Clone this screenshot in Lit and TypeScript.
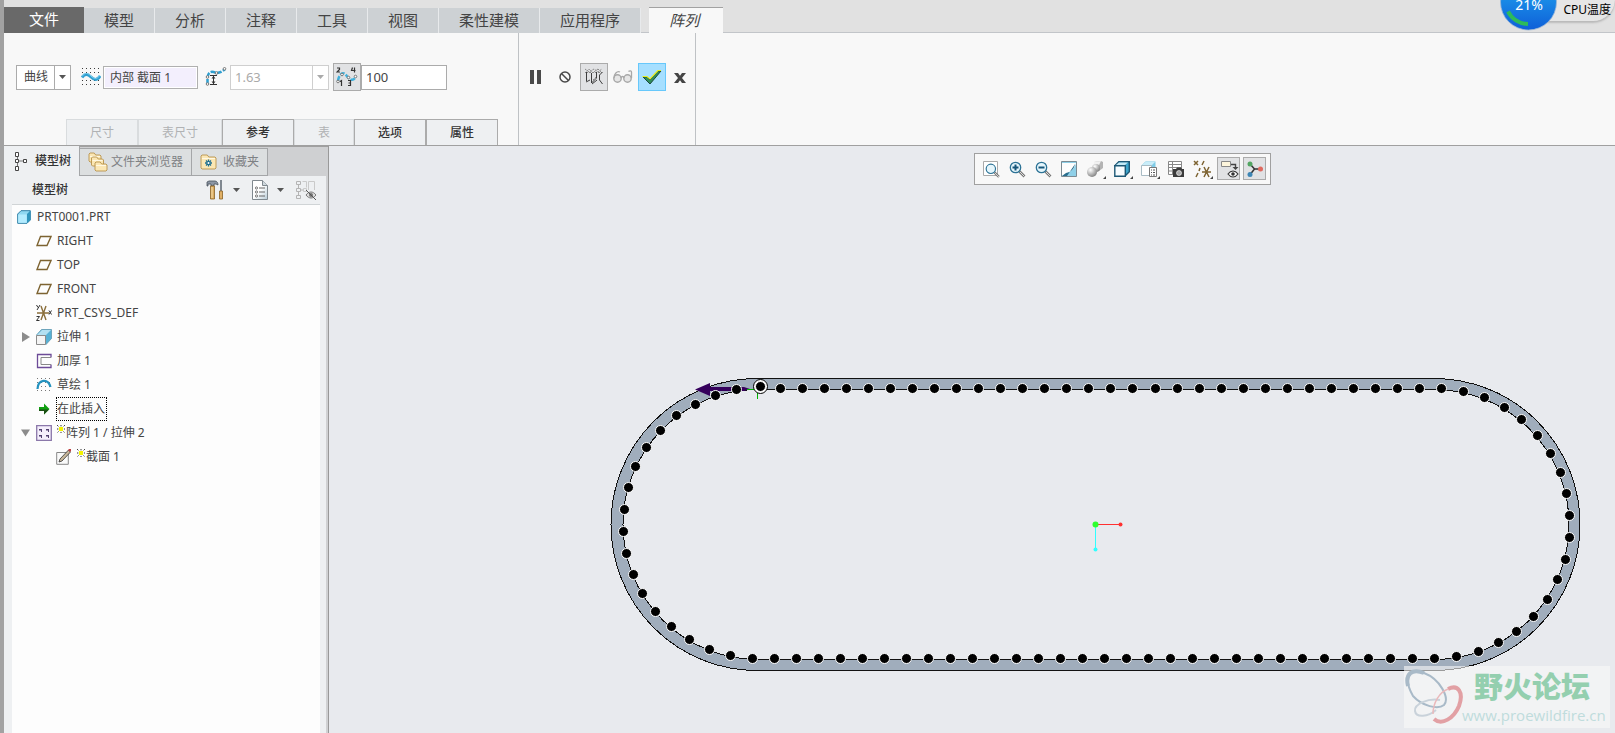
import { LitElement, html, css, svg } from "lit";
import { customElement, state } from "lit/decorators.js";
import { classMap } from "lit/directives/class-map.js";

/* ---------- icons ---------- */

const caret = html`<svg class="ic" width="7" height="4" viewBox="0 0 7 4"><path d="M0 0h7L3.500 4z" fill="currentColor" /></svg>`;

const iconWave = html`<svg class="ic" width="20" height="18" viewBox="0 0 20 18">
  ${[0.5, 4.5, 12.5, 16.5].map((y) => svg`<path d="M1 ${y}h18" stroke="#3c3c3c" stroke-dasharray="1 3" />`)}
  <path d="M1 9.500C4 5 7 6 10 9s6 4 9-1" fill="none" stroke="#2f9fd0" stroke-width="3" />
  <path d="M1 8.500C4 4 7 5 10 8s6 4 9-1" fill="none" stroke="#7fd0f0" stroke-width="1" />
</svg>`;

const iconSpacing = html`<svg class="ic" width="22" height="20" viewBox="0 0 22 20">
  <path d="M2.500 17V11C3 4 7 4 11 6c3 0 6-1 9-4" fill="none" stroke="#2f9fd0" stroke-width="2.500" stroke-dasharray="5 1.500" />
  <g fill="#fff" stroke="#777"><circle cx="2.500" cy="17" r="1.300" /><circle cx="2.500" cy="10" r="1.300" /><circle cx="11.500" cy="6" r="1.300" /><circle cx="19.500" cy="1.800" r="1.300" /></g>
  <path d="M5 8.500h7M5 17.500h7M8.500 9v8" stroke="#333" fill="none" />
  <path d="M6.500 11.500h4L8.500 9zM6.500 14.500h4L8.500 17z" fill="#333" />
</svg>`;

const iconCount = html`<svg class="ic" width="22" height="20" viewBox="0 0 22 20">
  <path d="M2 14C3 7 7 4 10 8s7 8 10 1" fill="none" stroke="#3fb0dc" stroke-width="2.500" stroke-dasharray="5 1.500" />
  <g fill="#fff" stroke="#777"><circle cx="2" cy="14.500" r="1.300" /><circle cx="6" cy="7.500" r="1.300" /><circle cx="12.500" cy="10.500" r="1.300" /><circle cx="19.500" cy="9.500" r="1.300" /></g>
  <g fill="none" stroke="#333" stroke-width="1.200"><path d="M1 1h2.500v1.500L1 5h3M16.500 .5L15.500 3.500h4M18.500 .5v5M4 14.500l1.500-1v5.500M12 13.500h2.500v5H12M12.500 16h2" /></g>
</svg>`;

const iconPause = html`<svg class="ic" width="12" height="14" viewBox="0 0 12 14"><path d="M0 0h4v14H0zM7 0h4v14H7z" fill="#4a4a4a" /></svg>`;
const iconBan = html`<svg class="ic" width="12" height="12" viewBox="0 0 12 12"><g fill="none" stroke="#484848" stroke-width="1.500"><circle cx="6" cy="6" r="5" /><path d="M2.500 2.500l7 7" /></g></svg>`;
const iconGeometry = html`<svg class="ic" width="20" height="18" viewBox="0 0 20 18">
  <path d="M1 5l4-4 4 4M1 1l4 3 5-3 4 3 4-3M10 4l4-3M2 4.500h16M9 12l3-3M14 1l4 4" fill="none" stroke="#8b8b8b" stroke-dasharray="2 1" />
  <path d="M2.500 4v9M2 14l4-2M7.500 5v10l5-5V4M8 16l5-4M18.500 4l-3 3v5l3 4" fill="none" stroke="#3d3d3d" />
</svg>`;
const iconGlasses = html`<svg class="ic" width="20" height="14" viewBox="0 0 20 14">
  <g fill="#e6e6e6" stroke="#a8a8a8" stroke-width="1.400"><circle cx="4.500" cy="8.500" r="3.700" /><circle cx="14.500" cy="8.500" r="3.700" /></g>
  <path d="M8 8c0-2 3-2 3 0M1 8C1 4 4 .500 7 2M18.500 8V2c0-1.500-2-1.500-3-.5" fill="none" stroke="#a8a8a8" stroke-width="1.300" />
</svg>`;
const iconCheck = html`<svg class="ic" width="20" height="15" viewBox="0 0 20 15">
  <path d="M1 7h4l3 3L16 1h3L8 14z" fill="#2f8f5c" stroke="#1d4a3a" stroke-width="1" />
  <path d="M.5 6.500H5l3 2.500 8-8.500h3" fill="none" stroke="#e8f01c" stroke-width="1.200" />
</svg>`;
const iconClose = html`<svg class="ic" width="12" height="10" viewBox="0 0 12 10"><path d="M0 0h4l2 2.700L8 0h4L8 5l4 5H8L6 7.300 4 10H0l4-5z" fill="#454545" /></svg>`;

const iconTreeTab = html`<svg class="ic" width="14" height="20" viewBox="0 0 14 20">
  <g fill="#fff" stroke="#444"><path d="M1.500 1.500h3v4h-3zM1.500 8.500h3v3h-3zM1.500 15.500h3v4h-3zM9.500 8.500h3v3h-3z" /></g>
  <path d="M3.500 6v2M3.500 12v3M5 10h4" stroke="#777" />
</svg>`;

const folder = (x: number, y: number, w: number, h: number) => svg`<path
  d="M${x} ${y + h - 1}V${y + 1}l1-1h${w * 0.35}l1.500 2h${w * 0.65 - 3.5}l1 1v${h - 4}l-1 1H${x + 1}z" fill="#fbe7b4" stroke="#b8934c" stroke-width=".9" />
  <path d="M${x + 1} ${y + 3.5}h${w - 2}" stroke="#fff8e2" />`;

const iconFolders = html`<svg class="ic" width="20" height="20" viewBox="0 0 20 20">${folder(1, 1, 12, 9)}${folder(3.5, 5, 12, 9)}${folder(7, 10, 12, 9)}</svg>`;
const iconFavorites = html`<svg class="ic" width="17" height="16" viewBox="0 0 17 16">${folder(1, 1, 15, 14)}
  <path d="M8.500 5.500v7M5 9h7M6 6.500l5 5M11 6.500l-5 5" stroke="#1f6f8f" stroke-width="1.300" /><circle cx="8.500" cy="9" r="1" fill="#fff" />
</svg>`;

const iconTools = html`<svg class="ic" width="18" height="20" viewBox="0 0 18 20">
  <path d="M1 2l2-1h6c2 0 3 2 3 4l-2-1H8v2H5V4H2v2H1z" fill="#8c96a4" stroke="#48505c" stroke-width=".8" />
  <path d="M4.500 6h4v13h-4z" fill="#d9ab62" stroke="#8a6224" stroke-width=".8" /><path d="M6 7v11" stroke="#f6dfae" />
  <path d="M15 0v11" stroke="#808890" stroke-width="2" /><path d="M13.500 11h3v8h-3z" fill="#e0b066" stroke="#8a6224" stroke-width=".8" />
</svg>`;
const iconList = html`<svg class="ic" width="16" height="20" viewBox="0 0 16 20">
  <defs><linearGradient id="pg" x1="0" y1="0" x2="1" y2="1"><stop offset=".5" stop-color="#fff" /><stop offset="1" stop-color="#b7cbd6" /></linearGradient></defs>
  <path d="M.5 .5h10l5 5v14H.5z" fill="url(#pg)" stroke="#80898f" /><path d="M10.500 .5v5h5" fill="#cfd9df" stroke="#80898f" />
  <path d="M7 8h6M7 12h6M7 16h6" stroke="#666" /><g fill="#fff" stroke="#666" stroke-width=".9"><circle cx="4.500" cy="8" r="1.100" /><circle cx="4.500" cy="12" r="1.100" /><circle cx="4.500" cy="16" r="1.100" /></g>
</svg>`;
const iconTreeHidden = html`<svg class="ic" width="20" height="20" viewBox="0 0 20 20">
  <g fill="none" stroke="#b4b4b4"><path d="M.5 1.500h4v3h-4zM.5 8.500h4v3h-4zM.5 15.500h4v3h-4zM2.500 5v3M2.500 12v3M5 10h3" /><path d="M6.500 1.500h4v6M7.500 8.500h3v3h-3zM12.500 10V1.500h6V10" stroke="#cacaca" /></g>
  <path d="M10 15c3-4 7-4 10 0-3 4-7 4-10 0z" fill="#ddd" stroke="#777" /><circle cx="15" cy="15" r="2" fill="#777" /><path d="M10 10l10 10" stroke="#555" />
</svg>`;

const treeIcons: Record<string, unknown> = {
  part: html`<svg class="ic" width="14" height="14" viewBox="0 0 14 14"><path d="M.7 4L4 .7h9.300V10L10 13.300H.7z" fill="#8fd8f2" stroke="#2f7fa5" /><path d="M1.200 4.500h8.500v8.300H1.200z" fill="#b4ecff" /><path d="M10 4l3.300-3.300V10L10 13.300z" fill="#2f95bd" /></svg>`,
  plane: html`<svg class="ic" width="16" height="16" viewBox="0 0 16 16"><path d="M4.500 3.500H15L11 12.500H1z" fill="none" stroke="#7d6331" stroke-width="1.400" /></svg>`,
  csys: html`<svg class="ic" width="16" height="16" viewBox="0 0 16 16"><path d="M5 1l5 14M10 1L5 15M1 8h12" stroke="#8a6e3a" stroke-width="1.400" /><path d="M.5 0l1.500 2.500M4 0L1 5M.5 11.500h3l-3 4h3M13 5.500l2.500 4M15.500 5.500l-2.500 4" fill="none" stroke="#333" /></svg>`,
  extrude: html`<svg class="ic" width="16" height="16" viewBox="0 0 16 16"><path d="M.5 6l5-5.500h10v9L10 15.500z" fill="#57b1d4" stroke="#5f98b0" stroke-width=".8" /><path d="M1 6l5-5h9L10 6z" fill="#b3e0f1" /><path d="M.5 6.500h9v9h-9z" fill="#f4f4f4" stroke="#8b8b8b" /></svg>`,
  thicken: html`<svg class="ic" width="16" height="16" viewBox="0 0 16 16"><path d="M15 4.500V1.500H1.500v13H15v-3" fill="none" stroke="#6d4b98" stroke-width="1.300" /><path d="M15 4.500H5v7h10" fill="none" stroke="#888" /></svg>`,
  sketch: html`<svg class="ic" width="16" height="16" viewBox="0 0 16 16">${[1.5, 5.5, 9.5, 13.5].map((y) => svg`<path d="M1 ${y}h14" stroke="#777" stroke-dasharray="1 3" />`)}<path d="M1.500 12C2 2 12 1 14.500 10" fill="none" stroke="#2492bf" stroke-width="2.200" /></svg>`,
  insert: html`<svg class="ic" width="16" height="16" viewBox="0 0 16 16"><path d="M3 6h5V2.500L13.500 8 8 13.500V10H3z" fill="#11a011" /><path d="M3 8.500h10L8 13.500V10H3z" fill="#1b4f14" /></svg>`,
  pattern: html`<svg class="ic" width="16" height="16" viewBox="0 0 16 16"><path d="M.7 .7h14.600v14.600H.7z" fill="#f5effc" stroke="#8b78aa" stroke-width="1.300" /><path d="M3 4h3v3H5V5.500H3zM10 4h3v3h-1V5.500h-2zM3 10h3v3H5v-1.500H3zM10 10h3v3h-1v-1.500h-2z" fill="#514070" /></svg>`,
  section: html`<svg class="ic" width="16" height="16" viewBox="0 0 16 16"><path d="M.7 3.500h11.600v11.800H.7z" fill="#fafafa" stroke="#888" /><path d="M3 13l1-3 8.500-9 2 2L6 12z" fill="#c8b79a" stroke="#333" stroke-width=".8" /><path d="M12 1l1-1h2v2l-1 1z" fill="#c04040" /></svg>`,
};

const star = html`<svg class="ic star" width="8" height="8" viewBox="0 0 8 8"><path d="M4 0v8M0 4h8M0 0l8 8M8 0L0 8" stroke="#333" stroke-dasharray="1.300 1" /><path d="M2 2h4v4H2z" fill="#f4f400" /></svg>`;

const magnifier = svg`<path d="M10.500 10.500l5 5" stroke="#777" stroke-width="2.600" /><path d="M10.500 10.500l5 5" stroke="#ddd" stroke-width="1" /><circle cx="6.500" cy="6.500" r="5.200" fill="#e6f6fc" stroke="#2d7396" stroke-width="1.300" />`;
const tri = svg`<path d="M19 15v3h-3z" fill="#444" />`;

const viewIcons = [
  { name: "重新调整", menu: false, on: false, art: svg`<path d="M.5 .5h14v14H.5z" fill="#fff" stroke="#aaa" /><g transform="translate(2 2) scale(.9)">${magnifier}</g>` },
  { name: "放大", menu: false, on: false, art: svg`${magnifier}<path d="M6.500 3.500v6M3.500 6.500h6" stroke="#17567a" stroke-width="2" />` },
  { name: "缩小", menu: false, on: false, art: svg`${magnifier}<path d="M3.500 6.500h6" stroke="#17567a" stroke-width="2" />` },
  { name: "重画", menu: false, on: false, art: svg`<path d="M.5 .5h15v15H.5z" fill="#8fd0e8" stroke="#7b8a92" /><path d="M1 2h14C14 8 9 11 1 15z" fill="#fdfdfd" /><path d="M1 15l4-3c5-1 8-4 9-9L6 15z" fill="#2a6d8c" /><path d="M4 9l9-7C13 6 9 9 4 9z" fill="#fff" />` },
  { name: "显示样式", menu: true, on: false, art: svg`<defs>
      <radialGradient id="ball" cx=".35" cy=".3" r=".8"><stop offset="0" stop-color="#fff" /><stop offset="1" stop-color="#777" /></radialGradient></defs>
      <path d="M7 1l7-1 2 1v6l-4 3H8z" fill="#b4b4b4" /><path d="M7 1l7-1-2 4H7z" fill="#f1f1f1" /><circle cx="9" cy="7" r="4" fill="url(#ball)" /><circle cx="5" cy="11" r="5" fill="url(#ball)" />` },
  { name: "已保存方向", menu: true, on: false, art: svg`<path d="M.8 4.800l4-4h10.500v10l-4 4z" fill="#3da5cc" stroke="#1d5876" stroke-width="1.400" /><path d="M2 4l3-2.500h9L11 4z" fill="#c5eaf7" /><path d="M.8 4.800h10.500v10.500H.8z" fill="#f7fcff" stroke="#1d5876" stroke-width="1.400" />` },
  { name: "视图管理器", menu: true, on: false, art: svg`<path d="M.5 4.500l4-4h10v10l-4 4z" fill="#7fcbe6" /><path d="M1 4l3.500-3H14l-3 3z" fill="#c9edf9" /><path d="M.5 4.500h10v10H.5z" fill="#fff" stroke="#a9bcc5" /><path d="M8.500 6.500h7v9h-7z" fill="#fff" stroke="#777" /><path d="M10 9h1M12 9h2M10 11.500h1M12 11.500h2M10 14h1M12 14h2" stroke="#555" />` },
  { name: "注释显示", menu: false, on: false, art: svg`<path d="M.5 .5h13v13H.5z" fill="#fff" stroke="#888" /><path d="M.5 3.500h13M.5 6.500h13M.5 10h13M4.500 .5v13" stroke="#888" /><path d="M5 8h3l1-1.500h4L14 8h2v8H5z" fill="#3b3b3b" /><circle cx="11" cy="12" r="2.500" fill="#aaa" stroke="#fff" stroke-width=".6" />` },
  { name: "基准显示", menu: true, on: false, art: svg`<path d="M0 0l4 4M4 0L0 4M10 0L8 4M6 7l-1 3M4 12l-2 4" stroke="#7d6331" stroke-width="1.500" /><path d="M10 6l5 10M15 6l-5 10M8 11h9" stroke="#7d6331" stroke-width="1.500" />` },
  { name: "注释方向", menu: false, on: true, art: svg`<path d="M.5 .5h9v5h-9z" fill="#fdf5dc" stroke="#888" /><path d="M10 3.500h4.500v3" fill="none" stroke="#444" stroke-width="1.400" /><path d="M11.500 6h6l-3 3z" fill="#444" /><path d="M7 13c3-4 7-4 10 0-3 4-7 4-10 0z" fill="#fff" stroke="#333" stroke-width="1.200" /><circle cx="12" cy="13" r="1.800" fill="#333" />` },
  { name: "旋转中心", menu: false, on: true, art: svg`<path d="M3.500 3.500L7.500 8h6M7.500 8l-4 5" fill="none" stroke="#333" stroke-width="1.500" /><circle cx="3" cy="3" r="2.500" fill="#53a562" /><circle cx="13.500" cy="8" r="2.500" fill="#e06a5f" /><circle cx="3" cy="13.500" r="2.500" fill="#3e86b5" />` },
];

/* ---------- data ---------- */

const menuTabs = ["模型", "分析", "注释", "工具", "视图", "柔性建模", "应用程序"];

const subTabs = [
  { label: "尺寸", enabled: false },
  { label: "表尺寸", enabled: false },
  { label: "参考", enabled: true },
  { label: "表", enabled: false },
  { label: "选项", enabled: true },
  { label: "属性", enabled: true },
];

interface TreeNode {
  label: string;
  icon: string;
  level: number;
  arrow?: "open" | "closed";
  star?: boolean;
  focus?: boolean;
}

const tree: TreeNode[] = [
  { label: "PRT0001.PRT", icon: "part", level: 0 },
  { label: "RIGHT", icon: "plane", level: 1 },
  { label: "TOP", icon: "plane", level: 1 },
  { label: "FRONT", icon: "plane", level: 1 },
  { label: "PRT_CSYS_DEF", icon: "csys", level: 1 },
  { label: "拉伸 1", icon: "extrude", level: 1, arrow: "closed" },
  { label: "加厚 1", icon: "thicken", level: 1 },
  { label: "草绘 1", icon: "sketch", level: 1 },
  { label: "在此插入", icon: "insert", level: 1, focus: true },
  { label: "阵列 1 / 拉伸 2", icon: "pattern", level: 1, arrow: "open", star: true },
  { label: "截面 1", icon: "section", level: 2, star: true },
];

const leftArc = [
  [736, 389], [715, 395], [695, 404], [676, 415], [660, 430], [646, 447], [635, 466], [628, 487], [624, 509],
  [623, 531], [626, 553], [633, 574], [642, 593], [655, 611], [671, 626], [689, 639], [709, 649], [730, 655],
];
const rightArc = [
  [1463, 391], [1484, 397], [1504, 407], [1521, 419], [1537, 435], [1550, 453], [1560, 472], [1566, 493], [1569, 515],
  [1569, 537], [1565, 559], [1557, 579], [1547, 599], [1533, 616], [1516, 631], [1498, 642], [1478, 651], [1456, 656],
];
const topRow = Array.from({ length: 31 }, (_, i) => [780 + Math.round(i * 22.03), 388]);
const bottomRow = Array.from({ length: 32 }, (_, i) => [752 + i * 22, 658]);
const members = [[760, 386], ...topRow, ...rightArc, ...bottomRow, ...leftArc];

const outerLoop = "M757 378.500H1434A146 146 0 0 1 1434 670.500H757A146 146 0 0 1 757 378.500z";
const innerLoop = "M758 389.500H1434A135 135 0 0 1 1434 659.500H758A135 135 0 0 1 758 389.500z";

@customElement("pattern-canvas")
export class PatternCanvas extends LitElement {
  static styles = css`
    :host { display: block; min-width: 0; }
    .view { display: block; width: 100%; height: 100%; }
    .line { fill: none; stroke: #111; shape-rendering: crispEdges; }
    .band { fill: #a0adbc; fill-rule: evenodd; }
    .dot { fill: #000; stroke: #fff; stroke-width: 1; }
    .ring { fill: none; stroke: #000; }
    .halo { fill: #fff; }
  `;

  render() {
    return html`<svg class="view" viewBox="329 146 1286 587" role="img" aria-label="阵列预览">
      <path class="band" d="${outerLoop}${innerLoop}" />
      <path class="line" d=${outerLoop} />
      <path class="line" d=${innerLoop} />
      <path d="M710 387h34l6 2-6 2h-34z" fill="#35005c" />
      <path d="M695 389.500l15-6.500v13z" fill="#35005c" />
      <path d="M747 389.500h10M757.500 389v10" fill="none" stroke="#00b400" shape-rendering="crispEdges" />
      <circle class="halo" cx="760.500" cy="386.500" r="7" />
      <circle class="ring" cx="760.500" cy="386.500" r="7" />
      ${members.map(([x, y]) => svg`<circle class="dot" cx=${x + 0.5} cy=${y + 0.5} r="5" />`)}
      <path d="M1095.500 524.500h24" stroke="#ff3030" shape-rendering="crispEdges" />
      <path d="M1095.500 524.500v24" stroke="#30ffff" shape-rendering="crispEdges" />
      <circle cx="1095.500" cy="524.500" r="3" fill="#2dff2d" />
      <circle cx="1120.500" cy="524.500" r="2" fill="#ff3030" />
      <circle cx="1095.500" cy="549.500" r="2" fill="#30ffff" />
    </svg>`;
  }
}

@customElement("app-root")
export class AppRoot extends LitElement {
  @state() private count = "100";

  static styles = css`
    :host {
      display: flex;
      flex-direction: column;
      position: relative;
      box-sizing: border-box;
      min-height: 100vh;
      border-left: 4px solid #a2a2a2;
      background: #e8eaee;
      color: #444;
      font: 12px/16px "Noto Sans", "Noto Sans CJK SC", sans-serif;
      overflow: hidden;
    }
    * { box-sizing: border-box; }
    button, input, select { font: inherit; color: inherit; margin: 0; padding: 0; border-radius: 0; outline: none; }
    button { border: 0; background: none; white-space: nowrap; }
    .ic { display: block; flex: none; }

    .menu { display: flex; align-items: flex-end; height: 33px; background: #e1e1e1; font-size: 15px; line-height: 22px; border-bottom: 1px solid #c2c5c9; }
    .menu button { height: 25px; padding: 0 20px 2px; background: #cdd1d4; border-right: 1px solid #e8eaec; margin-bottom: -1px; }
    .menu .file { height: 26px; padding: 0 25px 3px; background: #696969; color: #fff; border: 0; }
    .menu .current { height: 26px; margin-left: 8px; padding: 0 24px 2px 20px; background: #f8f8f8; border: 0; border-top: 1px solid #a2a2a2; font-style: italic; }

    .ribbon { display: flex; background: #f8f8f8; border-bottom: 1px solid #a0a0a0; }
    .settings { display: flex; flex-direction: column; gap: 28px; padding: 30px 20px 0 12px; border-right: 1px solid #bfc2c5; }
    .fields { display: flex; align-items: center; height: 28px; }
    .combo { display: grid; grid-template-columns: 1fr 16px; height: 25px; background: #fff; border: 1px solid #ababab; }
    .combo select, .combo input { grid-area: 1 / 1 / 2 / 3; appearance: none; width: 100%; min-width: 0; border: 0; background: none; }
    .combo .arrow { grid-area: 1 / 2; display: grid; place-items: center; pointer-events: none; border-left: 1px solid #ababab; color: #555; }
    .kind { width: 55px; }
    .kind select { padding-left: 7px; }
    .spacing { width: 99px; border-color: #cfcfcf; color: #aaa; }
    .spacing input { padding-left: 4px; font-size: 13px; }
    .spacing .arrow { border-color: #cfcfcf; color: #aaa; }
    .gap { margin: 0 2px 0 10px; }
    .gap-b { margin: 0 3px 0 7px; }
    .curve { width: 95px; height: 23px; padding: 0 6px; border: 1px solid #b0b0b0; background: #f3effd; box-shadow: inset 0 0 0 1px #fff; }
    .count { width: 86px; height: 25px; padding: 0 4px; border: 1px solid #ababab; background: #fff; font-size: 13px; }
    .toggle { display: grid; place-items: center; width: 28px; height: 28px; }
    .toggle.on { background: #e1e2e4; border: 1px solid #ababab; }
    .toggle.accept { background: #a6dfff; border: 1px solid #67c8fb; }
    .fields .toggle { margin-left: 4px; }
    .subtabs { display: flex; padding-left: 50px; }
    .subtabs button { height: 26px; padding: 1px 23px 0; background: #eef0f2; border: 1px solid #ababab; border-bottom: 0; color: #333; font-weight: 500; }
    .subtabs button:disabled { border-color: #d9dcde; color: #b0b2b4; font-weight: 400; }
    .actions { display: flex; gap: 1px; padding: 30px 0 0 3px; border-right: 1px solid #bfc2c5; }
    .actions .toggle:last-child { padding: 1px 3px 0 0; }

    .work { display: grid; grid-template-columns: 325px minmax(0, 1fr); flex: 1; }
    .panel { display: flex; flex-direction: column; background: #eef0f2; border-right: 1px solid #999; box-shadow: inset -2px 0 0 #d0d1d3; }
    .ptabs { display: flex; height: 30px; background: #cfd0d2; box-shadow: inset 0 1px 0 #a0a0a0; }
    .ptabs button { display: flex; align-items: center; gap: 3px; margin-top: 2px; height: 28px; padding: 0 8px 1px; background: #dcdfe0; border: 1px solid #a4a6a8; border-left: 0; color: #7e8184; }
    .ptabs .sel { gap: 7px; margin-top: 0; height: 30px; padding: 0 8px 1px 10px; background: #eef0f2; border-width: 0 1px 0 0; color: #333; font-weight: 500; }
    .ptabs .fav { gap: 6px; }
    .ptitle { display: flex; align-items: center; height: 28px; padding: 0 12px 0 28px; }
    .ptitle h2 { flex: 1; margin: 0; font-size: 12px; font-weight: 500; color: #333; }
    .ptitle button { display: flex; align-items: center; gap: 9px; color: #555; }
    .ptitle .list { margin: 0 12px; }
    .tree { flex: 1; margin: 0 8px; padding: 0; list-style: none; background: #fdfdfd; border-top: 1px solid #d0d4d6; }
    .node { display: flex; align-items: center; height: 24px; padding-left: 5px; gap: 5px; }
    .node.l0 { gap: 6px; }
    .node.l1 { padding-left: 8px; }
    .node.l2 { padding-left: 28px; }
    .twist { width: 11px; display: grid; place-items: center; color: #8c8c8c; }
    .text { display: flex; gap: 1px; white-space: pre; }
    .focus { outline: 1px dotted #000; padding: 3px 1px 3px 0; }

    .stage { display: grid; position: relative; min-height: 0; }
    .viewbar { position: absolute; top: 7px; left: 50%; margin-left: 2px; display: flex; gap: 3px; height: 32px; padding: 3px 4px; background: #f8f8f8; border: 1px solid #a0a0a0; }
    .viewbar button { display: grid; place-items: center; width: 23px; height: 23px; border: 1px solid transparent; }
    .viewbar button.menuicon { width: 24px; }
    .viewbar button.on { background: #e1e2e4; border-color: #ababab; }
    .viewbar .ic { overflow: visible; }

    .mark { position: absolute; right: 5px; bottom: 5px; display: flex; height: 62px; width: 206px; background: rgba(248, 249, 248, 0.6); }
    .mark .ic { margin-right: -4px; }
    .mark .words { flex: 1; }
    .mark strong { display: block; padding-left: 12px; font: 900 29px/39px "Noto Sans CJK SC", sans-serif; color: #94cfaf; }
    .mark a { display: block; font: 15px/20px "Open Sans", sans-serif; color: #bfdcdc; text-decoration: none; }

    .gauge { position: absolute; top: 0; right: 0; display: flex; align-items: flex-start; }
    .gauge .pill { margin-left: -14px; height: 22px; padding: 1px 4px 0 20px; background: #e6e6e6; border-bottom: 1px solid #bbb; border-radius: 0 0 22px 0; box-shadow: 0 1px 2px #bbb; line-height: 18px; color: #000; }
    .gauge .pct { position: relative; z-index: 1; }
    .gauge text { font-size: 14px; fill: #fff; }
  `;

  private onCount(e: Event) {
    this.count = (e.target as HTMLInputElement).value;
  }

  private renderNode(n: TreeNode) {
    return html`<li class="node l${n.level}">
      ${n.level === 1
        ? html`<span class="twist">${n.arrow === "closed"
            ? html`<svg class="ic" width="8" height="10" viewBox="0 0 8 10"><path d="M0 0l8 5-8 5z" fill="currentColor" /></svg>`
            : n.arrow === "open"
              ? html`<svg class="ic" width="9" height="8" viewBox="0 0 10 8"><path d="M0 0h10L5 8z" fill="currentColor" /></svg>`
              : ""}</span>`
        : n.level === 2 ? html`<span class="twist"></span>` : ""}
      ${treeIcons[n.icon]}
      <span class=${classMap({ text: true, focus: !!n.focus })}>${n.star ? star : ""}<span>${n.label}</span></span>
    </li>`;
  }

  render() {
    return html`
      <nav class="menu" aria-label="功能区">
        <button class="file">文件</button>
        ${menuTabs.map((t) => html`<button>${t}</button>`)}
        <button class="current">阵列</button>
      </nav>

      <section class="ribbon">
        <div class="settings">
          <div class="fields">
            <span class="combo kind">
              <select aria-label="阵列类型"><option>曲线</option></select>
              <span class="arrow">${caret}</span>
            </span>
            <label class="gap" for="curve">${iconWave}</label>
            <input id="curve" class="curve" aria-label="曲线参考" value="内部 截面 1" />
            <label class="gap-b" for="space">${iconSpacing}</label>
            <span class="combo spacing">
              <input id="space" aria-label="间距" value="1.63" disabled />
              <span class="arrow">${caret}</span>
            </span>
            <button class="toggle on" aria-label="成员数">${iconCount}</button>
            <input class="count" aria-label="阵列成员数" .value=${this.count} @input=${this.onCount} />
          </div>
          <div class="subtabs">
            ${subTabs.map((t) => html`<button ?disabled=${!t.enabled}>${t.label}</button>`)}
          </div>
        </div>
        <div class="actions">
          <button class="toggle" aria-label="暂停">${iconPause}</button>
          <button class="toggle" aria-label="无预览">${iconBan}</button>
          <button class="toggle on" aria-label="分离">${iconGeometry}</button>
          <button class="toggle" aria-label="校验">${iconGlasses}</button>
          <button class="toggle accept" aria-label="确定">${iconCheck}</button>
          <button class="toggle" aria-label="取消">${iconClose}</button>
        </div>
      </section>

      <main class="work">
        <aside class="panel">
          <div class="ptabs">
            <button class="sel">${iconTreeTab}<span>模型树</span></button>
            <button>${iconFolders}<span>文件夹浏览器</span></button>
            <button class="fav">${iconFavorites}<span>收藏夹</span></button>
          </div>
          <div class="ptitle">
            <h2>模型树</h2>
            <button aria-label="设置">${iconTools}${caret}</button>
            <button class="list" aria-label="显示">${iconList}${caret}</button>
            <button aria-label="隐藏项">${iconTreeHidden}</button>
          </div>
          <ul class="tree">${tree.map((n) => this.renderNode(n))}</ul>
        </aside>

        <section class="stage">
          <pattern-canvas></pattern-canvas>
          <div class="viewbar" role="toolbar" aria-label="视图">
            ${viewIcons.map((v) => html`<button class=${classMap({ on: v.on, menuicon: v.menu })} aria-label=${v.name}>
              <svg class="ic" width="16" height="16" viewBox="0 0 16 16">${v.art}${v.menu ? tri : ""}</svg>
            </button>`)}
          </div>
          <div class="mark">
            <svg class="ic" width="62" height="62" viewBox="0 0 62 62">
              <g fill="none">
                <path d="M9 30C-2 10 6 2 20 7 36 13 46 32 40 39 34 44 18 40 9 30z" stroke="#a9bac8" stroke-width="2" />
                <path d="M4 20C1 8 8 2 20 7" stroke="#a9bac8" stroke-width="4" />
                <path d="M36 34C24 32 10 38 11 45 12 52 24 51 32 44" stroke="#c9d2da" stroke-width="2" />
                <path d="M30 53C38 60 50 52 55 40 60 26 54 18 44 23" stroke="#e2a0a4" stroke-width="4" />
                <path d="M44 23C36 26 29 36 29 48" stroke="#eab9bb" stroke-width="1.500" />
              </g>
            </svg>
            <span class="words"><strong>野火论坛</strong><a href="#">www.proewildfire.cn</a></span>
          </div>
        </section>
      </main>

      <div class="gauge">
        <svg class="ic pct" width="57" height="32" viewBox="0 0 57 32">
          <defs><linearGradient id="blue" x1="0" y1="0" x2="0" y2="1"><stop offset=".4" stop-color="#1a8fe8" /><stop offset="1" stop-color="#0f5fd8" /></linearGradient></defs>
          <circle cx="28.500" cy="2" r="28" fill="url(#blue)" stroke="#9bb6d6" stroke-width=".8" />
          <path d="M8 11.500A23 23 0 0 0 28 24" fill="none" stroke="#2dbb5a" stroke-width="4" />
          <text x="29" y="10" text-anchor="middle">21%</text>
        </svg>
        <span class="pill">CPU温度</span>
      </div>
    `;
  }
}
